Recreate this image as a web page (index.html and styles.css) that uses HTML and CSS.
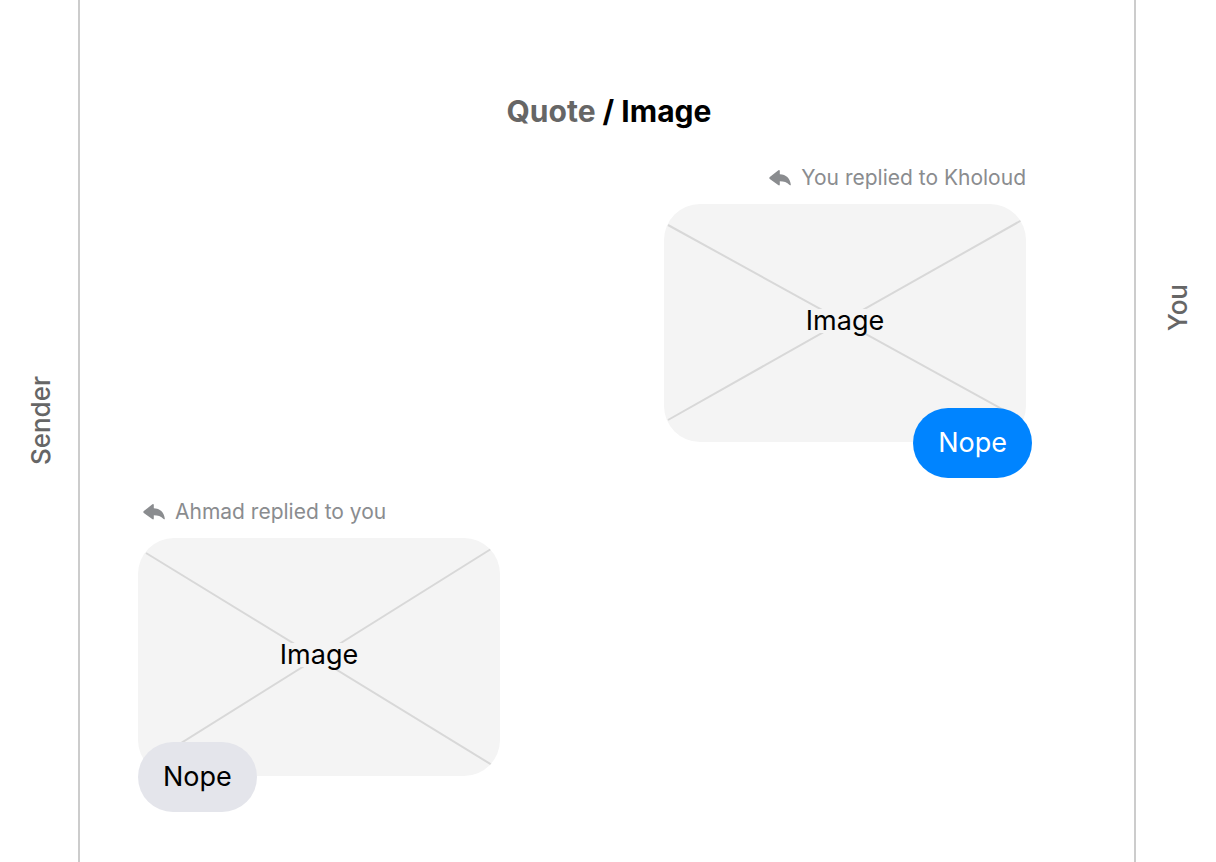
FILE: index.html
```
<!DOCTYPE html>
<html lang="en">
<head>
<meta charset="UTF-8">
<meta name="viewport" content="width=device-width, initial-scale=1">
<title>Quote / Image</title>
<link rel="stylesheet" href="styles.css">
</head>
<body>
  <div class="board">
    <aside class="side side-sender"><span class="side-label">Sender</span></aside>
    <main class="chat">
      <h1 class="title"><span class="title-group">Quote</span> / Image</h1>

      <section class="message message-you">
        <p class="reply-info">
          <svg class="reply-icon" viewBox="0 0 22 18" aria-hidden="true">
            <path d="M9.4 1.3 Q10.6 .4 10.8 1.9 V5.2 C17 5.6 21 9 21.8 15.4 Q21.8 17 20.6 15.9 C18 13 14.8 12.2 10.8 12.2 V15.4 Q10.6 17 9.2 16.1 L.8 9.9 Q-.2 9 .8 8.1 Z"/>
          </svg>
          <span>You replied to Kholoud</span>
        </p>
        <div class="quote">
          <svg class="quote-lines" viewBox="0 0 362 238" preserveAspectRatio="none" aria-hidden="true">
            <path d="M4 21 L358 216 M4 216 L358 16"/>
          </svg>
          <span class="quote-text">Image</span>
        </div>
        <p class="bubble">Nope</p>
      </section>

      <section class="message message-sender">
        <p class="reply-info">
          <svg class="reply-icon" viewBox="0 0 22 18" aria-hidden="true">
            <path d="M9.4 1.3 Q10.6 .4 10.8 1.9 V5.2 C17 5.6 21 9 21.8 15.4 Q21.8 17 20.6 15.9 C18 13 14.8 12.2 10.8 12.2 V15.4 Q10.6 17 9.2 16.1 L.8 9.9 Q-.2 9 .8 8.1 Z"/>
          </svg>
          <span>Ahmad replied to you</span>
        </p>
        <div class="quote">
          <svg class="quote-lines" viewBox="0 0 362 238" preserveAspectRatio="none" aria-hidden="true">
            <path d="M8 15 L354 227 M8 227 L353 11"/>
          </svg>
          <span class="quote-text">Image</span>
        </div>
        <p class="bubble">Nope</p>
      </section>
    </main>
    <aside class="side side-you"><span class="side-label">You</span></aside>
  </div>
</body>
</html>
```
FILE: styles.css
```
* { margin: 0; padding: 0; box-sizing: border-box; }
body {
  background: #fff;
  color: #000;
  font-family: Inter, "Liberation Sans", sans-serif;
  font-size: 27px;
}
.board {
  display: flex;
  min-height: 100vh;
}

/* side columns */
.side {
  display: flex;
  flex: none;
  justify-content: center;
  align-items: flex-start;
  width: 80px;
  color: #666;
}
.side-sender {
  padding: 376px 0 0 4px;
  border-right: 2px solid #ccc;
}
.side-you {
  width: 82px;
  padding: 284px 0 0 4px;
  border-left: 2px solid #ccc;
}
.side-label {
  font-size: 26px;
  font-weight: 500;
  line-height: 32px;
  writing-mode: vertical-rl;
  transform: rotate(180deg);
}

/* chat */
.chat {
  display: flex;
  flex: 1;
  flex-direction: column;
  padding: 92px 108px 50px 58px;
}
.title {
  margin-right: -54px;
  font-size: 30px;
  font-weight: 700;
  line-height: 38px;
  text-align: center;
}
.title-group { color: #666; }
.message {
  display: flex;
  flex-direction: column;
  width: 362px;
  max-width: 100%;
}
.message-you {
  align-self: flex-end;
  margin-top: 34px;
}
.message-sender { margin-top: 20px; }
.reply-info {
  display: flex;
  align-items: center;
  gap: 10px;
  margin-bottom: 12px;
  color: #8a8c8f;
  font-size: 21px;
  line-height: 28px;
}
.message-you .reply-info { justify-content: flex-end; }
.message-sender .reply-info { padding-left: 5px; }
.reply-icon {
  width: 22px;
  height: 18px;
  fill: #8a8c8f;
}
.quote {
  display: grid;
  place-items: center;
  height: 238px;
  overflow: hidden;
  border-radius: 36px;
  background: #f4f4f4;
}
.quote-lines,
.quote-text { grid-area: 1 / 1; }
.quote-lines {
  width: 100%;
  height: 238px;
  fill: none;
  stroke: #d8d8d8;
  stroke-width: 2;
}
.quote-text {
  z-index: 1;
  margin-bottom: 4px;
  background: #f4f4f4;
  line-height: 24px;
}
.bubble {
  z-index: 1;
  margin-top: -34px;
  padding: 17px 25px;
  border-radius: 35px;
  line-height: 36px;
}
.message-you .bubble {
  align-self: flex-end;
  margin-right: -6px;
  background: #0084ff;
  color: #fff;
}
.message-sender .bubble {
  align-self: flex-start;
  background: #e4e5eb;
}
```
